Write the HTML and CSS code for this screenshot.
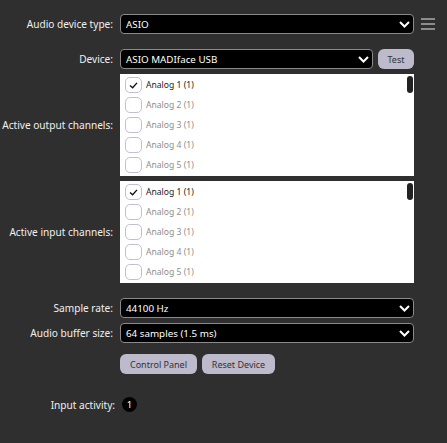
FILE: index.html
```html
<!DOCTYPE html>
<html>
<head>
<meta charset="utf-8">
<link rel="stylesheet" href="styles.css">
</head>
<body>
<div class="panel">
  <div class="row r-type">
    <div class="label">Audio device type:</div>
    <div class="combo"><span>ASIO</span><svg class="chev" viewBox="0 0 11 7" width="11" height="7"><path d="M1 1 L5.5 5.5 L10 1" fill="none" stroke="#fff" stroke-width="2"/></svg></div>
    <div class="menu"><span></span><span></span><span></span></div>
  </div>

  <div class="row r-dev">
    <div class="label">Device:</div>
    <div class="devrow">
      <div class="combo grow"><span>ASIO MADIface USB</span><svg class="chev" viewBox="0 0 11 7" width="11" height="7"><path d="M1 1 L5.5 5.5 L10 1" fill="none" stroke="#fff" stroke-width="2"/></svg></div>
      <button class="btn test">Test</button>
    </div>
  </div>

  <div class="row r-out">
    <div class="label">Active output channels:</div>
    <div class="list">
      <div class="item on"><span class="cb"><svg viewBox="0 0 10 8" width="9" height="7"><path d="M1 4 L4 6.5 L9 1" fill="none" stroke="#111" stroke-width="1.6"/></svg></span>Analog 1 (1)</div>
      <div class="item"><span class="cb"></span>Analog 2 (1)</div>
      <div class="item"><span class="cb"></span>Analog 3 (1)</div>
      <div class="item"><span class="cb"></span>Analog 4 (1)</div>
      <div class="item"><span class="cb"></span>Analog 5 (1)</div>
      <div class="thumb"></div>
    </div>
  </div>

  <div class="row r-in">
    <div class="label">Active input channels:</div>
    <div class="list">
      <div class="item on"><span class="cb"><svg viewBox="0 0 10 8" width="9" height="7"><path d="M1 4 L4 6.5 L9 1" fill="none" stroke="#111" stroke-width="1.6"/></svg></span>Analog 1 (1)</div>
      <div class="item"><span class="cb"></span>Analog 2 (1)</div>
      <div class="item"><span class="cb"></span>Analog 3 (1)</div>
      <div class="item"><span class="cb"></span>Analog 4 (1)</div>
      <div class="item"><span class="cb"></span>Analog 5 (1)</div>
      <div class="thumb"></div>
    </div>
  </div>

  <div class="row r-rate">
    <div class="label">Sample rate:</div>
    <div class="combo"><span>44100 Hz</span><svg class="chev" viewBox="0 0 11 7" width="11" height="7"><path d="M1 1 L5.5 5.5 L10 1" fill="none" stroke="#fff" stroke-width="2"/></svg></div>
  </div>

  <div class="row r-buf">
    <div class="label">Audio buffer size:</div>
    <div class="combo"><span>64 samples (1.5 ms)</span><svg class="chev" viewBox="0 0 11 7" width="11" height="7"><path d="M1 1 L5.5 5.5 L10 1" fill="none" stroke="#fff" stroke-width="2"/></svg></div>
  </div>

  <div class="row r-btn">
    <div class="label"></div>
    <div class="btnrow">
      <button class="btn cp">Control Panel</button>
      <button class="btn rd">Reset Device</button>
    </div>
  </div>

  <div class="row r-act">
    <div class="label">Input activity:</div>
    <div class="activity"><span class="dot">1</span></div>
  </div>
</div>
</body>
</html>
```

FILE: styles.css
```css
html, body {
  margin: 0;
  padding: 0;
  background: #2f2f2f;
  width: 447px;
  height: 443px;
  overflow: hidden;
}
.panel {
  display: flex;
  flex-direction: column;
  padding-top: 14px;
  font-family: "Noto Sans", "Open Sans", sans-serif;
  font-size: 10px;
}
.row {
  display: flex;
  align-items: center;
  gap: 7px;
}
.label {
  width: 113px;
  flex: none;
  color: #f0f0f0;
  text-align: right;
  white-space: nowrap;
  font-size: 10.1px;
}
.r-type { height: 20px; }
.r-dev { height: 20px; margin-top: 15px; }
.r-out { height: 102px; margin-top: 5px; }
.r-in { height: 102px; margin-top: 5px; }
.r-rate { height: 20px; margin-top: 15px; }
.r-buf { height: 20px; margin-top: 5px; }
.r-btn { height: 20px; margin-top: 11px; }
.r-act { height: 15px; margin-top: 23px; }
.r-act .label { width: 115px; }
.combo {
  width: 294px;
  box-sizing: border-box;
  height: 20px;
  background: #000;
  border: 1px solid #8a8a8a;
  border-radius: 4px;
  color: #fff;
  display: flex;
  align-items: center;
  justify-content: space-between;
  padding: 0 3px 0 5px;
  font-size: 9.8px;
}
.menu {
  display: flex;
  flex-direction: column;
  justify-content: center;
  gap: 3px;
  width: 14px;
}
.menu span {
  display: block;
  height: 2px;
  background: #8c8c8c;
}
.devrow {
  width: 294px;
  display: flex;
  gap: 5px;
}
.combo.grow { flex: 1; width: auto; }
.btn {
  font-family: "Noto Sans", "Open Sans", sans-serif;
  font-size: 9px;
  color: #333;
  background: #bdbacb;
  border: none;
  border-radius: 6px;
  height: 20px;
  padding: 0;
}
.test { width: 36px; }
.list {
  width: 294px;
  height: 102px;
  background: #fff;
  position: relative;
  box-sizing: border-box;
  padding-top: 1px;
  align-self: stretch;
}
.item {
  height: 20px;
  display: flex;
  align-items: center;
  color: #8e8e8e;
  font-size: 8.6px;
  padding-left: 5px;
}
.item.on { color: #1a1a1a; }
.cb {
  box-sizing: border-box;
  width: 17px;
  height: 16px;
  border: 1px solid #c2bfd2;
  border-radius: 5px;
  margin-right: 4px;
  display: flex;
  align-items: center;
  justify-content: center;
}
.thumb {
  position: absolute;
  right: 1px;
  top: 2px;
  width: 6px;
  height: 17px;
  border-radius: 3px;
  background: #222;
}
.btnrow {
  display: flex;
  gap: 5px;
}
.cp { width: 77px; }
.rd { width: 73px; }
.activity {
  display: flex;
  align-items: center;
}
.dot {
  width: 15px;
  height: 15px;
  border-radius: 50%;
  background: #000;
  color: #fff;
  font-size: 9.5px;
  display: flex;
  align-items: center;
  justify-content: center;
}
```
